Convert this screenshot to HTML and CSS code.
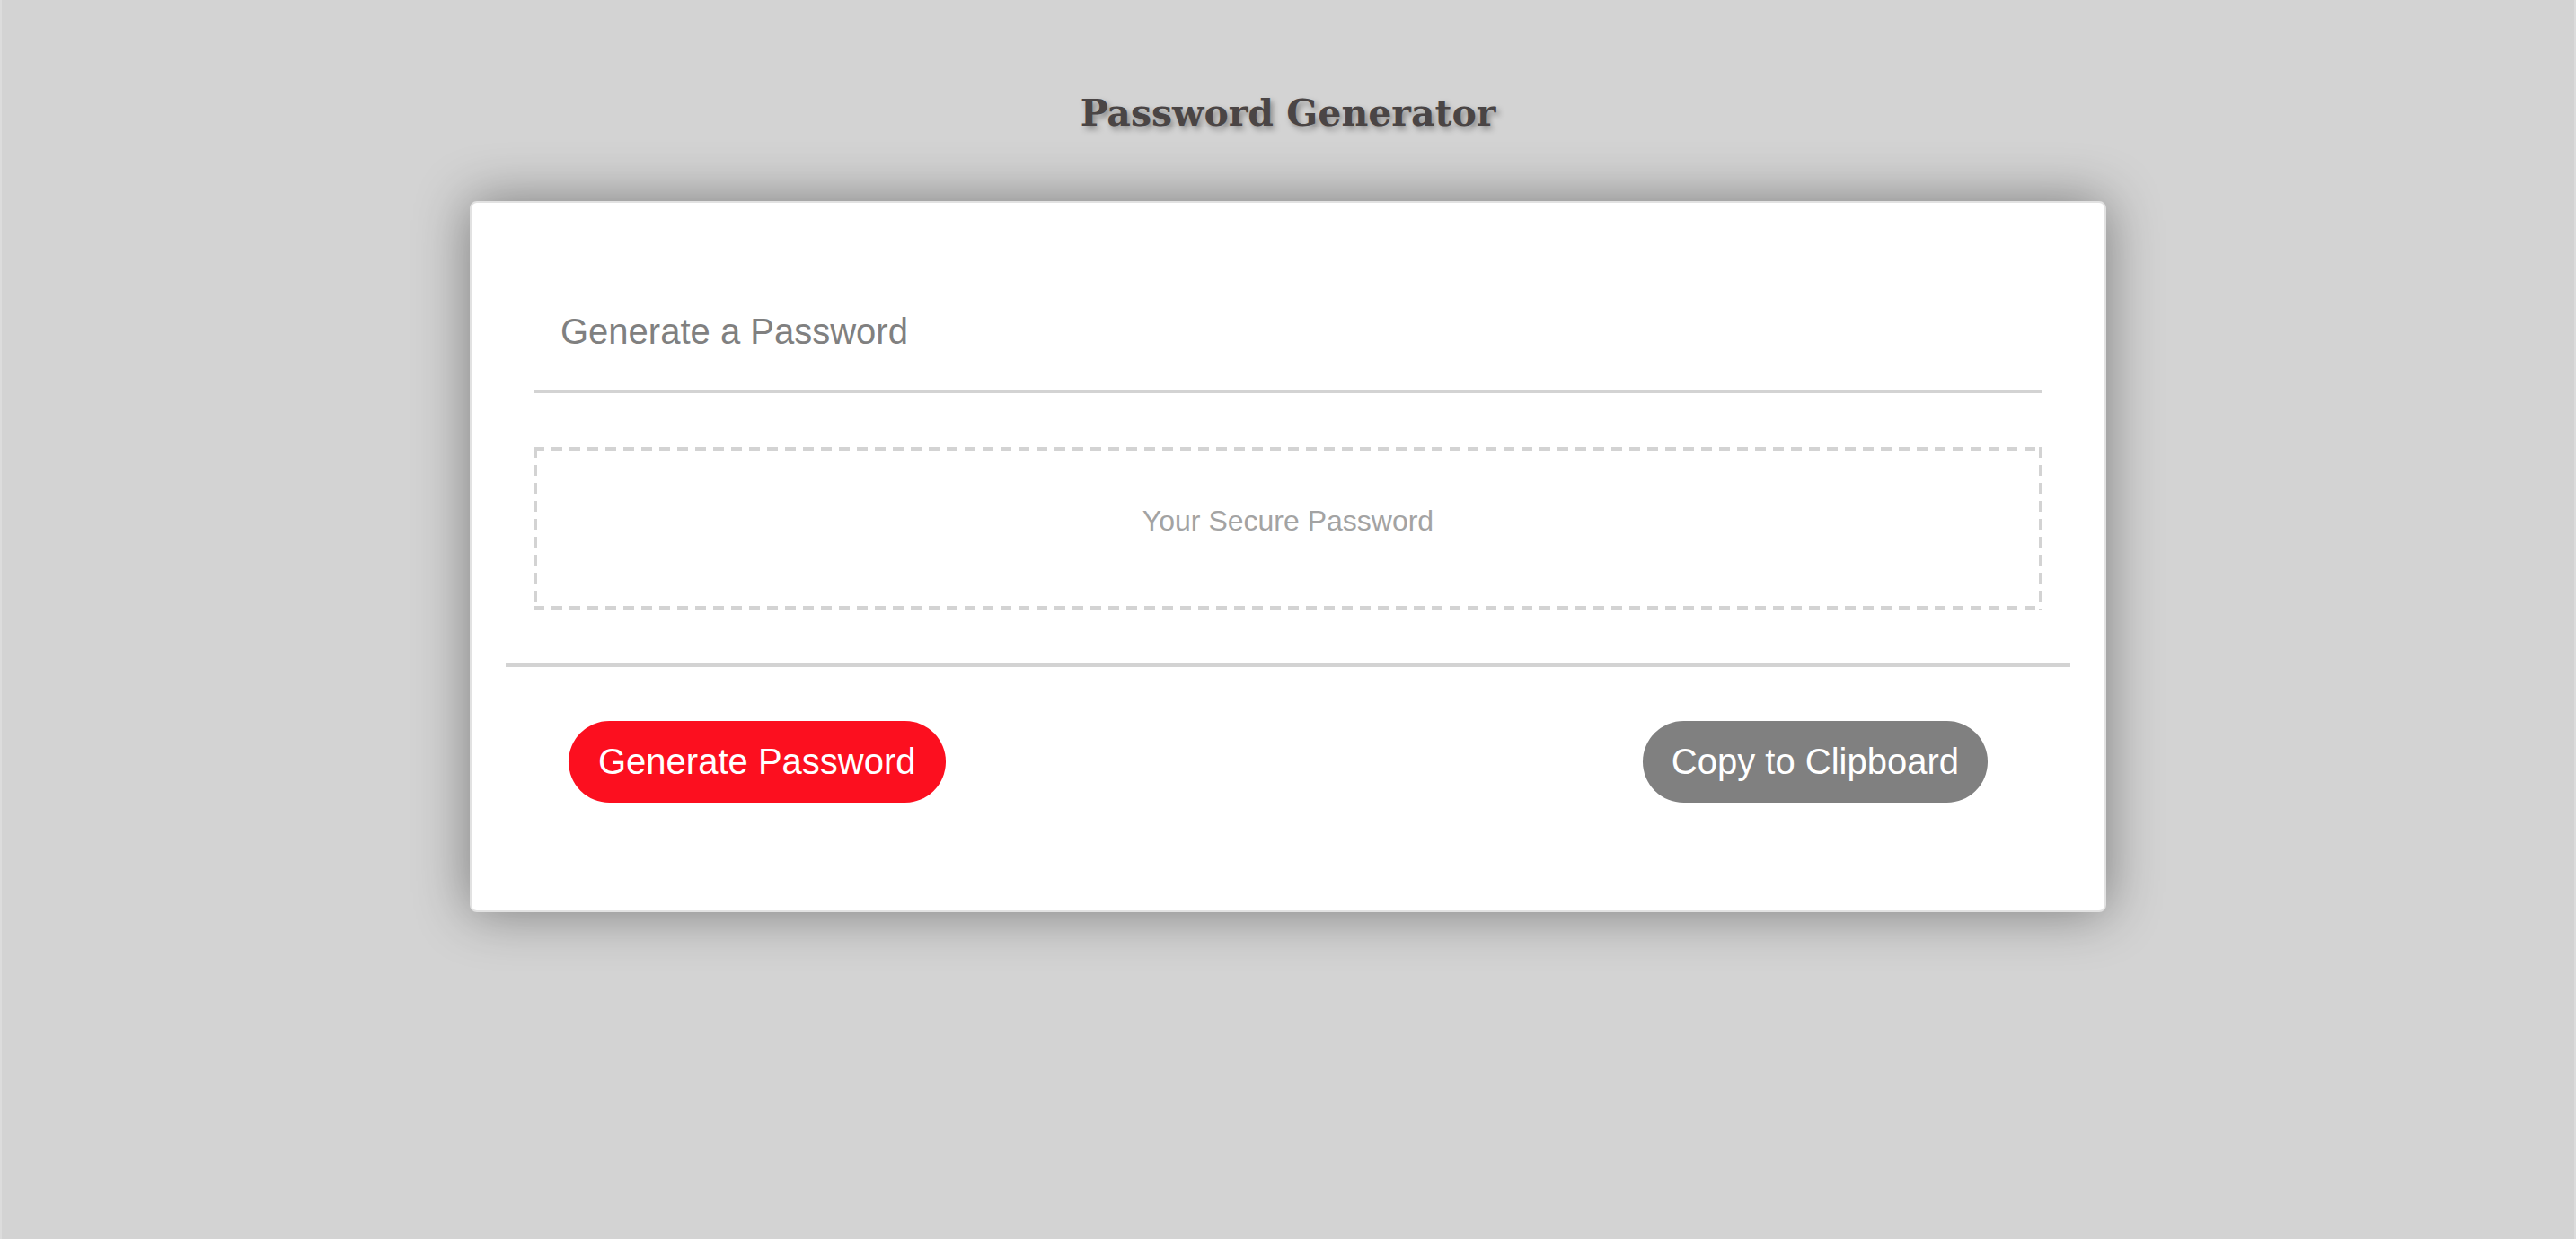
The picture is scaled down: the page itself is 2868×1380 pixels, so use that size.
FILE: index.html
```html
<!DOCTYPE html>
<html lang="en">
<head>
<meta charset="UTF-8">
<title>Password Generator</title>
<link rel="stylesheet" href="styles.css">
</head>
<body>
<div class="wrapper">
  <header class="page-header">
    <h1 class="title">Password Generator</h1>
  </header>
  <main class="card">
    <div class="card-header">
      <h2 class="card-title">Generate a Password</h2>
    </div>
    <div class="card-body">
      <div class="password-box">
        <span class="placeholder">Your Secure Password</span>
      </div>
    </div>
    <div class="card-footer">
      <button class="btn btn-generate" type="button">Generate Password</button>
      <button class="btn btn-copy" type="button">Copy to Clipboard</button>
    </div>
  </main>
</div>
</body>
</html>
```

FILE: styles.css
```css
*, *::before, *::after {
  box-sizing: border-box;
}

html, body {
  margin: 0;
  padding: 0;
  height: 100%;
}

body {
  background-color: #d3d3d3;
  font-family: "Liberation Sans", Arial, sans-serif;
}

.wrapper {
  min-height: 100%;
  padding-top: 103px;
  border-left: 2px solid #dcdcdc;
  border-right: 2px solid #dcdcdc;
}

.page-header {
  text-align: center;
}

.title {
  margin: 0 0 75px;
  font-family: "DejaVu Serif", Georgia, serif;
  font-weight: bold;
  font-size: 41px;
  line-height: 46px;
  color: #4a4545;
  text-shadow: 3px 4px 6px rgba(0, 0, 0, 0.35);
}

.card {
  width: 1822px;
  margin: 0 auto;
  background: #ffffff;
  border: 2px solid #e2e2e2;
  border-radius: 8px;
  box-shadow: 0 0 60px rgba(0, 0, 0, 0.42);
  padding: 120px 38px 120px;
}

.card-header {
  margin: 0 31px;
  padding: 0 0 42px 30px;
  border-bottom: 4px solid #d3d3d3;
}

.card-title {
  margin: 0;
  font-weight: normal;
  font-size: 40px;
  line-height: 46px;
  color: #808080;
}

.card-body {
  margin: 60px 31px 60px;
}

.password-box {
  height: 181px;
  padding-top: 64px;
  display: flex;
  justify-content: center;
  align-items: flex-start;
  background:
    repeating-linear-gradient(90deg, #d3d3d3 0 12px, transparent 12px 20px) top left / 100% 4px no-repeat,
    repeating-linear-gradient(90deg, #d3d3d3 0 12px, transparent 12px 20px) bottom left / 100% 4px no-repeat,
    repeating-linear-gradient(180deg, #d3d3d3 0 12px, transparent 12px 20px) top left / 4px 100% no-repeat,
    repeating-linear-gradient(180deg, #d3d3d3 0 12px, transparent 12px 20px) top right / 4px 100% no-repeat;
}

.placeholder {
  font-size: 32px;
  line-height: 37px;
  color: #a3a3a3;
}

.card-footer {
  border-top: 4px solid #d3d3d3;
  padding: 60px 92px 0 70px;
  display: flex;
  justify-content: space-between;
  align-items: center;
}

.btn {
  border: none;
  border-radius: 46px;
  color: #ffffff;
  font-family: "Liberation Sans", Arial, sans-serif;
  font-size: 40px;
  line-height: 47px;
  padding: 22px 33px;
  cursor: pointer;
}

.btn-generate {
  background-color: #fc0f1f;
}

.btn-copy {
  background-color: #808080;
  padding: 22px 32px;
}
```
